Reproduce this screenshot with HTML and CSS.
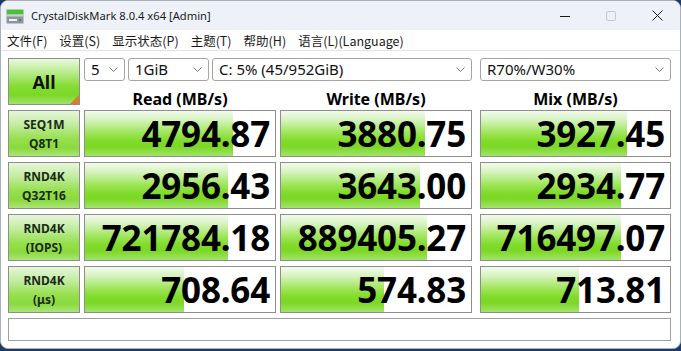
FILE: index.html
```html
<!DOCTYPE html>
<html lang="zh-CN">
<head>
    <meta charset="UTF-8">
    <meta name="viewport" content="width=device-width, initial-scale=1.0">
    <title>CrystalDiskMark 8.0.4 x64 [Admin]</title>
    <link rel="stylesheet" href="styles.css">
</head>
<body>
    <div class="window">
        <div class="titlebar">
            <svg class="app-icon" width="18" height="15" viewBox="0 0 18 15">
                <rect x="0.5" y="0.5" width="17" height="5" fill="#4fbf3a"/>
                <rect x="0.5" y="5.5" width="17" height="9" fill="#8c979b"/>
                <rect x="0.5" y="5.5" width="17" height="2" fill="#c9d0d3"/>
                <rect x="3" y="10" width="8" height="2" fill="#eef2f3"/>
                <rect x="13" y="10" width="2" height="2" fill="#3a8f2a"/>
            </svg>
            <span class="title">CrystalDiskMark 8.0.4 x64 [Admin]</span>
            <div class="controls">
                <svg width="10" height="10" viewBox="0 0 10 10"><path d="M0 5.5h10" stroke="#1a1a1a" stroke-width="1"/></svg>
                <svg width="10" height="10" viewBox="0 0 10 10"><rect x="0.5" y="0.5" width="9" height="9" rx="1.5" fill="none" stroke="#c4c8cc"/></svg>
                <svg width="11" height="11" viewBox="0 0 11 11"><path d="M0.5 0.5l10 10M10.5 0.5l-10 10" stroke="#1a1a1a" stroke-width="1"/></svg>
            </div>
        </div>

        <div class="menubar">
            <span>文件(F)</span>
            <span>设置(S)</span>
            <span>显示状态(P)</span>
            <span>主题(T)</span>
            <span>帮助(H)</span>
            <span>语言(L)(Language)</span>
        </div>

        <div class="main">
            <div class="board">
                <div class="btn-all">All</div>

                <div class="select-group">
                    <div class="select w-count">5<svg class="chev" width="9" height="5" viewBox="0 0 9 5"><path d="M0.5 0.5l4 4 4-4" fill="none" stroke="#777"/></svg></div>
                    <div class="select w-size">1GiB<svg class="chev" width="9" height="5" viewBox="0 0 9 5"><path d="M0.5 0.5l4 4 4-4" fill="none" stroke="#777"/></svg></div>
                    <div class="select w-drive">C: 5% (45/952GiB)<svg class="chev" width="9" height="5" viewBox="0 0 9 5"><path d="M0.5 0.5l4 4 4-4" fill="none" stroke="#777"/></svg></div>
                </div>
                <div class="select mix-col">R70%/W30%<svg class="chev" width="9" height="5" viewBox="0 0 9 5"><path d="M0.5 0.5l4 4 4-4" fill="none" stroke="#777"/></svg></div>

                <div class="col-head">Read (MB/s)</div>
                <div class="col-head">Write (MB/s)</div>
                <div class="col-head mix-col">Mix (MB/s)</div>

                <!-- SEQ1M Q8T1 -->
                <div class="test-label">SEQ1M<br>Q8T1</div>
                <div class="result"><div class="bar" style="width: 78%"></div><span class="value">4794.87</span></div>
                <div class="result"><div class="bar" style="width: 76%"></div><span class="value">3880.75</span></div>
                <div class="result mix-col"><div class="bar" style="width: 77%"></div><span class="value">3927.45</span></div>

                <!-- RND4K Q32T16 -->
                <div class="test-label">RND4K<br>Q32T16</div>
                <div class="result"><div class="bar" style="width: 75%"></div><span class="value">2956.43</span></div>
                <div class="result"><div class="bar" style="width: 73%"></div><span class="value">3643.00</span></div>
                <div class="result mix-col"><div class="bar" style="width: 74%"></div><span class="value">2934.77</span></div>

                <!-- RND4K IOPS -->
                <div class="test-label">RND4K<br>(IOPS)</div>
                <div class="result"><div class="bar" style="width: 75%"></div><span class="value">721784.18</span></div>
                <div class="result"><div class="bar" style="width: 77%"></div><span class="value">889405.27</span></div>
                <div class="result mix-col"><div class="bar" style="width: 74%"></div><span class="value">716497.07</span></div>

                <!-- RND4K latency -->
                <div class="test-label">RND4K<br>(μs)</div>
                <div class="result"><div class="bar" style="width: 52%"></div><span class="value">708.64</span></div>
                <div class="result"><div class="bar" style="width: 54%"></div><span class="value">574.83</span></div>
                <div class="result mix-col"><div class="bar" style="width: 52%"></div><span class="value">713.81</span></div>

                <div class="comment"></div>
            </div>
        </div>
    </div>
</body>
</html>
```

FILE: styles.css
```css
body {
    margin: 0;
    background: #1d3a67;
    font-family: 'Noto Sans', 'Noto Sans CJK SC', sans-serif;
    color: #000;
}
.window {
    width: 679px;
    height: 347px;
    background: #fff;
    border: 1px solid #a9b1ba;
    border-radius: 8px;
    overflow: hidden;
    display: flex;
    flex-direction: column;
}
.titlebar {
    height: 29px;
    flex: none;
    background: #eef2f8;
    display: flex;
    align-items: center;
    padding-left: 5px;
}
.app-icon {
    margin-right: 7px;
    margin-top: 1px;
}
.title {
    font-size: 11.2px;
    color: #1a1a1a;
}
.controls {
    margin-left: auto;
    display: flex;
    align-items: center;
    gap: 36px;
    margin-right: 17px;
}
.menubar {
    height: 20px;
    flex: none;
    display: flex;
    align-items: center;
    gap: 12px;
    padding-left: 6px;
    font-size: 12.5px;
    font-family: 'Noto Sans CJK SC', 'Noto Sans', sans-serif;
    color: #1a1a1a;
    border-bottom: 1px solid #e3e3e3;
}
.main {
    flex: 1;
    padding: 7px 0 0 7px;
}
.board {
    display: grid;
    grid-template-columns: 72px 192px 192px 195px;
    grid-template-rows: 23px 19px repeat(4, 47px) 23px;
    column-gap: 4px;
    row-gap: 5px;
}
.mix-col {
    margin-left: 4px;
}
.btn-all {
    grid-row: span 2;
    position: relative;
    box-sizing: border-box;
    border: 1px solid #8e8e8e;
    background: linear-gradient(to bottom, #e9f8de 0%, #b9ec8c 30%, #86dd34 60%, #7bd826 80%, #9fe26a 100%);
    font-weight: bold;
    font-size: 18px;
    display: flex;
    align-items: center;
    justify-content: center;
    color: #111;
}
.btn-all::after {
    content: '';
    position: absolute;
    right: 0;
    bottom: 0;
    border-style: solid;
    border-width: 0 0 9px 9px;
    border-color: transparent transparent #e07b28 transparent;
}
.select-group {
    grid-column: span 2;
    display: flex;
    gap: 3px;
}
.select {
    box-sizing: border-box;
    height: 23px;
    border: 1px solid #a5a5a5;
    border-radius: 3px;
    background: #fff;
    font-size: 15px;
    line-height: 21px;
    padding-left: 6px;
    display: flex;
    align-items: center;
    color: #111;
}
.chev {
    margin-left: auto;
    margin-right: 6px;
}
.w-count { width: 41px; }
.w-size { width: 81px; }
.w-drive { flex: 1; }
.col-head {
    text-align: center;
    font-weight: bold;
    font-size: 16px;
    line-height: 26px;
    white-space: nowrap;
}
.col-head:nth-of-type(3) {
    grid-column: 2;
}
.test-label {
    box-sizing: border-box;
    border: 1px solid #8e8e8e;
    background: linear-gradient(to bottom, #e6f6da 0%, #c3eca0 30%, #96e04e 62%, #8ad93c 82%, #ace57c 100%);
    font-weight: bold;
    font-size: 12px;
    line-height: 19px;
    text-align: center;
    display: flex;
    align-items: center;
    justify-content: center;
    color: #1c2a1c;
}
.result {
    position: relative;
    box-sizing: border-box;
    border: 1px solid #8e8e8e;
    background: #fff;
    overflow: hidden;
}
.bar {
    height: 100%;
    background: linear-gradient(to bottom, #f3fbee 0%, #d2f2b8 22%, #a4e764 45%, #82dc2c 65%, #7cd824 80%, #a2e46c 100%);
}
.value {
    position: absolute;
    right: 5px;
    top: 0;
    font-weight: bold;
    font-size: 35px;
    line-height: 45px;
    letter-spacing: -0.2px;
}
.comment {
    grid-column: 1 / -1;
    box-sizing: border-box;
    border: 1px solid #a0a0a0;
    background: #fff;
}
```
